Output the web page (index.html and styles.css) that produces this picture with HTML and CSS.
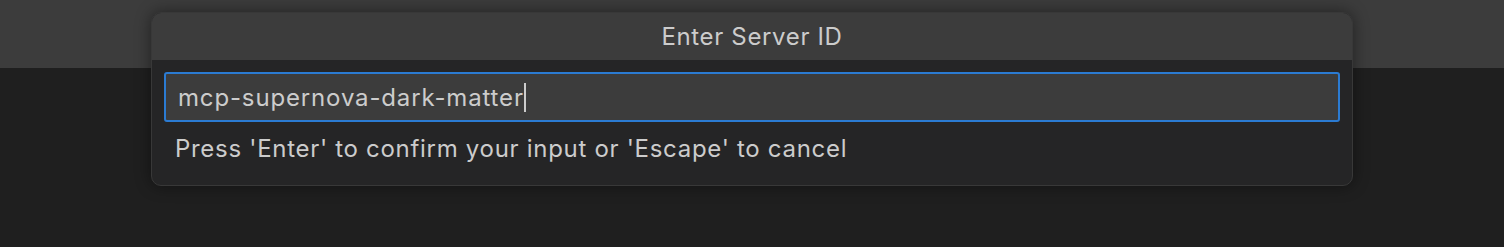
FILE: index.html
```html
<html>
<head>
<title>Enter Server ID</title>
<link rel="stylesheet" href="styles.css">
</head>
<body>
<div class="titlebar"></div>
<div class="editor"></div>

<div class="quick-input">
  <div class="qi-title">Enter Server ID</div>
  <div class="qi-body">
    <div class="qi-box">
      <span class="qi-value">mcp-supernova-dark-matter</span><span class="qi-caret"></span>
    </div>
    <div class="qi-message">Press 'Enter' to confirm your input or 'Escape' to cancel</div>
  </div>
</div>
</body>
</html>
```

FILE: styles.css
```css
body {
  margin: 0;
  background-color: #1f1f1f;
  font-family: Inter, "Noto Sans", sans-serif;
  height: 247px;
  overflow: hidden;
}
.titlebar {
  height: 68px;
  background-color: #3c3c3c;
}
.quick-input {
  position: absolute;
  top: 12px;
  left: 151px;
  width: 1202px;
  height: 174px;
  box-sizing: border-box;
  border: 1px solid #383838;
  border-radius: 10px;
  background-color: #252526;
  box-shadow: 0px 0px 16px rgba(0, 0, 0, 0.45);
  overflow: hidden;
  display: flex;
  flex-direction: column;
}
.qi-title {
  height: 47px;
  flex: none;
  background-color: #3c3c3c;
  color: #cccccc;
  font-size: 24px;
  letter-spacing: 0.65px;
  display: flex;
  align-items: center;
  justify-content: center;
}
.qi-body {
  padding: 12px 12px 0 12px;
}
.qi-box {
  height: 50px;
  box-sizing: border-box;
  border: 2px solid #2b7bd2;
  border-radius: 3px;
  background-color: #3c3c3c;
  display: flex;
  align-items: center;
  padding-left: 12px;
  color: #cccccc;
  font-size: 24px;
  letter-spacing: 0.85px;
}
.qi-caret {
  width: 2px;
  height: 29px;
  background-color: #cccccc;
}
.qi-message {
  color: #cccccc;
  font-size: 24px;
  letter-spacing: 0.7px;
  padding: 12px 0 0 11px;
}
```
